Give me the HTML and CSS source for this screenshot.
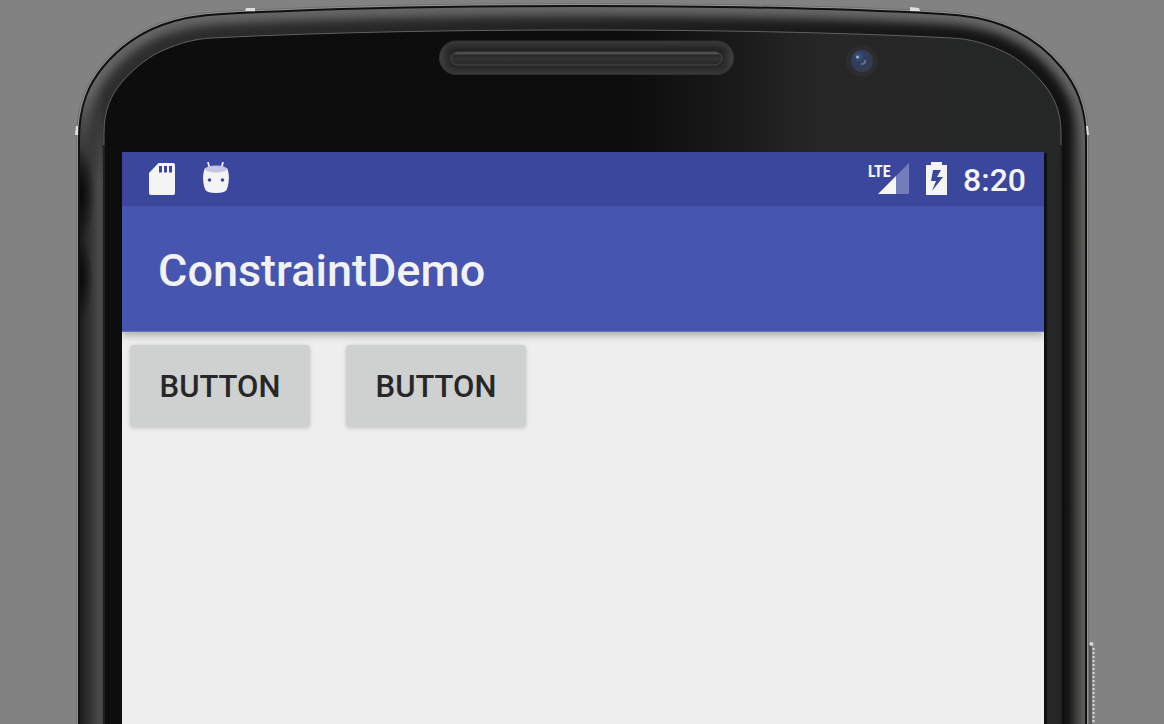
FILE: index.html
```
<!DOCTYPE html>
<html lang="en">
<head>
<meta charset="utf-8">
<meta name="viewport" content="width=device-width, initial-scale=1">
<title>ConstraintDemo</title>
<link rel="stylesheet" href="styles.css">
</head>
<body>
<div class="stage">
  <svg class="device" viewBox="0 0 1164 724" preserveAspectRatio="none" aria-hidden="true">
    <defs>
      <path id="shell" d="M79 740V140C79 105 89 84 103 67C117 50 138 34 162 25C181 18 200 15 222 14C330 8 460 6 582 6C704 6 834 8 942 14C964 15 983 18 1002 25C1026 34 1047 50 1061 67C1075 84 1086 105 1086 140V740Z"/>
      <path id="glass" d="M104 740V133C104 110 111 95 122 82C135 67 151 55 164 50C180 43 194 39 212 38C330 32 460 30 582 30C704 30 834 32 952 38C970 39 984 43 1000 50C1013 55 1029 67 1042 82C1053 95 1061 110 1061 133V740Z"/>
      <clipPath id="shellClip"><use href="#shell"/></clipPath>
      <filter id="soft" x="-10%" y="-10%" width="120%" height="120%"><feGaussianBlur stdDeviation="5"/></filter>
      <linearGradient id="glassFill" gradientUnits="userSpaceOnUse" x1="0" y1="0" x2="1164" y2="0">
        <stop offset=".54" stop-color="#0d0d0d"/><stop offset=".62" stop-color="#181818"/><stop offset=".7" stop-color="#262626"/><stop offset="1" stop-color="#252827"/>
      </linearGradient>
      <linearGradient id="shellFill" gradientUnits="userSpaceOnUse" x1="0" y1="0" x2="1164" y2="0">
        <stop offset=".1" stop-color="#2e2e2e"/><stop offset=".5" stop-color="#222"/><stop offset=".9" stop-color="#121212"/>
      </linearGradient>
      <linearGradient id="leftSide"><stop offset="0" stop-color="#191919"/><stop offset=".4" stop-color="#303030"/><stop offset=".85" stop-color="#4d4d4d"/><stop offset="1" stop-color="#3a3a3a"/></linearGradient>
      <linearGradient id="rightSide"><stop offset="0" stop-color="#0c0c0c"/><stop offset=".3" stop-color="#161616"/><stop offset=".65" stop-color="#434241"/><stop offset="1" stop-color="#666462"/></linearGradient>
      <linearGradient id="fade" x1="0" y1="0" x2="0" y2="1"><stop offset="0" stop-color="#000"/><stop offset=".14" stop-color="#fff"/></linearGradient>
      <mask id="fadeMask"><rect y="90" width="1164" height="650" fill="url(#fade)"/></mask>
      <radialGradient id="shade"><stop offset="0" stop-color="#050505" stop-opacity=".8"/><stop offset=".4" stop-color="#050505" stop-opacity=".5"/><stop offset="1" stop-color="#050505" stop-opacity="0"/></radialGradient>
      <linearGradient id="slot" x1="0" y1="0" x2="0" y2="1"><stop offset="0" stop-color="#3b3b3b"/><stop offset=".3" stop-color="#202020"/><stop offset=".75" stop-color="#272727"/><stop offset="1" stop-color="#3a3a3a"/></linearGradient>
      <linearGradient id="slotEnds"><stop offset="0" stop-color="#444"/><stop offset=".05" stop-color="#333" stop-opacity="0"/><stop offset=".95" stop-color="#333" stop-opacity="0"/><stop offset="1" stop-color="#444"/></linearGradient>
      <linearGradient id="grill" x1="0" y1="0" x2="0" y2="1"><stop offset="0" stop-color="#555"/><stop offset=".25" stop-color="#292929"/><stop offset=".5" stop-color="#333"/><stop offset="1" stop-color="#292929"/></linearGradient>
      <radialGradient id="lens" cx=".35" cy=".3"><stop offset="0" stop-color="#3a5a87"/><stop offset=".5" stop-color="#303f60"/><stop offset="1" stop-color="#333c54"/></radialGradient>
    </defs>
    <use href="#shell" fill="none" stroke="#717171" stroke-width="6"/>
    <use href="#shell" fill="none" stroke="#939393" stroke-width="4"/>
    <g clip-path="url(#shellClip)">
      <use href="#shell" fill="url(#shellFill)"/>
      <use href="#shell" fill="none" stroke="#666" stroke-width="20" filter="url(#soft)"/>
      <g mask="url(#fadeMask)">
        <rect x="79" y="90" width="25" height="650" fill="url(#leftSide)"/>
        <rect x="1061" y="90" width="25" height="650" fill="url(#rightSide)"/>
      </g>
      <ellipse cx="81" cy="194" rx="14" ry="46" fill="url(#shade)"/>
      <ellipse cx="81" cy="278" rx="12" ry="40" fill="url(#shade)"/>
    </g>
    <use href="#shell" fill="none" stroke="#101010" stroke-width="2"/>
    <use href="#glass" fill="url(#glassFill)" stroke="#606060" stroke-width="1"/>
    <path d="M104 145V740M1061 145V740" stroke="#202020" stroke-width="2"/>
    <g fill="#dedede">
      <path d="M246 8L255 8L255 11L245 11ZM910 7L919 8L920 11L910 11ZM76 126L78 126L78 135L75 135ZM1086 126L1088 126L1089 135L1087 135Z"/>
    </g>
    <rect x="439.500" y="41" width="294" height="33.500" rx="16.500" fill="url(#slot)"/>
    <rect x="439.500" y="41" width="294" height="33.500" rx="16.500" fill="url(#slotEnds)" stroke="#303030"/>
    <rect x="451" y="52" width="271" height="13" rx="6.500" fill="url(#grill)" stroke="#484848"/>
    <path d="M456 53.500H718" stroke="#545454"/>
    <circle cx="862" cy="61" r="16" fill="#2d2d2d"/>
    <circle cx="862" cy="61" r="11" fill="url(#lens)"/>
    <circle cx="857.500" cy="57" r="1.500" fill="#a0b2c9"/>
    <path d="M861 64Q866 64 865 60" fill="none" stroke="#62718f" stroke-width="2"/>
    <path d="M1090.500 645V724" stroke="#5b5b5b" stroke-width="3"/>
    <circle cx="1091.500" cy="644" r="2" fill="#d6d6d6"/>
    <path d="M1093.500 646V724" stroke="#888" stroke-width="3"/>
    <path d="M1093.500 648V724" stroke="#d8d8d8" stroke-width="2" stroke-dasharray="2 2"/>
  </svg>

  <main class="screen">
    <header>
      <div class="status">
        <div class="status-group notices">
          <svg width="26" height="32" viewBox="0 0 26 32" role="img" aria-label="SD card"><path fill="#f4f4f4" fill-rule="evenodd" d="M9.500 0H24Q26 0 26 2V30Q26 32 24 32H2Q0 32 0 30V10ZM10 3V9.500H13V3ZM15 3V9.500H18V3ZM20 3V9.500H23V3Z"/></svg>
          <svg width="28" height="34" viewBox="0 0 28 34" role="img" aria-label="Android debugging"><path d="M6 0L7.500 6M21 0L19.500 6" stroke="#eeeef5" stroke-width="1.800"/><path fill="#f4f4f4" d="M3 6C0 12 1 22 3 27Q4 31 14 31Q24 31 25 27C27 22 28 12 25 6Z"/><ellipse cx="14" cy="7" rx="11" ry="3.500" fill="#c3c6e0"/><circle cx="7.500" cy="18" r="1.800" fill="#3949a0"/><circle cx="20.500" cy="18" r="1.800" fill="#3949a0"/></svg>
        </div>
        <div class="status-group indicators">
          <svg width="42" height="32" viewBox="0 0 42 32" role="img" aria-label="LTE signal"><path fill="#747dbb" d="M41 0V31H28V13Z"/><path fill="#f6f6f6" d="M28 13V31H10Z"/><text class="lte" x="0" y="14">LTE</text></svg>
          <svg width="21" height="35" viewBox="0 0 21 35" role="img" aria-label="Battery charging"><path fill="#f4f4f4" fill-rule="evenodd" d="M5 0H16V3H21V33H0V3H5ZM7 8L5 19H10L6 29L17 15H11L15 8Z"/></svg>
          <time class="clock">8:20</time>
        </div>
      </div>
      <div class="appbar"><h1>ConstraintDemo</h1></div>
    </header>
    <div class="content">
      <button type="button">BUTTON</button>
      <button type="button">BUTTON</button>
    </div>
  </main>
</div>
</body>
</html>
```
FILE: styles.css
```
* { box-sizing: border-box; }
body { margin: 0; background: #828282; font-family: Roboto, sans-serif; }
.stage {
  position: relative;
  display: grid;
  grid-template-columns: 122fr 922fr 120fr;
  grid-template-rows: auto 1fr;
  min-height: 100vh;
  padding-top: 152px;
  overflow: hidden;
}
.device { position: absolute; inset: 0; width: 100%; height: 100%; }
.screen {
  position: relative;
  grid-column: 2;
  grid-row: 1 / 3;
  background: #eeeeee;
  box-shadow: 3px 1px 0 #101010;
}
header { position: relative; box-shadow: 0 3px 8px rgba(0, 0, 0, .3); clip-path: inset(0 0 -16px 0); }
.status {
  display: flex;
  align-items: center;
  justify-content: space-between;
  height: 54px;
  padding: 0 18px 0 27px;
  background: #3a479d;
}
.status-group { display: flex; align-items: center; }
.notices { gap: 27px; }
.indicators { gap: 16px; }
.clock { color: #f4f4f4; font-size: 32px; font-weight: 500; line-height: 54px; padding-top: 2px; }
.lte { font: bold 16px "Roboto Condensed", Roboto, sans-serif; fill: #f4f4f4; }
.appbar {
  display: flex;
  align-items: center;
  height: 126px;
  padding: 5px 36px 0;
  background: #4655af;
  border-bottom: 1px solid #6570bd;
}
h1 { margin: 0; color: #f2f2f4; font-size: 45px; line-height: 56px; font-weight: 500; }
.content { display: flex; gap: 36px; padding: 13px 8px; }
button {
  width: 180px;
  height: 82px;
  padding: 2px 0 0;
  border: 0;
  border-radius: 4px;
  background: #cfd1d0;
  box-shadow: 0 1px 4px rgba(0, 0, 0, .18);
  color: #272727;
  font: 500 31px/40px Roboto, sans-serif;
}
```
